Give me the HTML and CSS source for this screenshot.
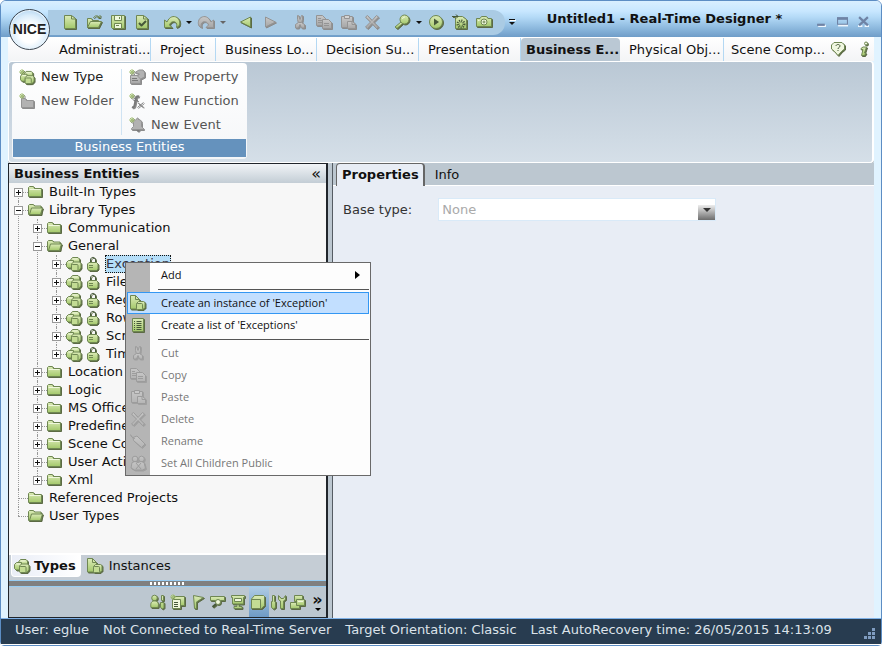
FILE: index.html
```html
<!DOCTYPE html>
<html lang="en">
<head>
<meta charset="utf-8">
<title>Untitled1 - Real-Time Designer</title>
<link rel="stylesheet" href="styles.css">
</head>
<body>
<svg class="sprite" aria-hidden="true">
  <defs>
    <linearGradient id="green" x1="0" y1="0" x2="0" y2="1"><stop offset="0" stop-color="#dcebb8"/><stop offset="1" stop-color="#a3c86a"/></linearGradient>
    <linearGradient id="grey" x1="0" y1="0" x2="0" y2="1"><stop offset="0" stop-color="#c8c8c8"/><stop offset="1" stop-color="#a6a6a6"/></linearGradient>
    <linearGradient id="faint" x1="0" y1="0" x2="0" y2="1"><stop offset="0" stop-color="#c6c6c6"/><stop offset="1" stop-color="#b4b4b4"/></linearGradient>
  </defs>
  <symbol id="file" viewBox="0 0 16 16"><path d="M2.500 1.500h7l4 3v10h-11z"/><path class="line" d="M9.500 1.500v3.500h4"/></symbol>
  <symbol id="open" viewBox="0 0 16 16"><path d="M1.500 13.500v-9h4l1 2h6v7z"/><path d="M1.500 13.500l3-6h11l-3 6z"/><path class="line" d="M7.500 4c1-3 5-3 6 0m-2-.5h2.500v-2.500"/></symbol>
  <symbol id="save" viewBox="0 0 16 16"><path d="M1.500 1.500h13v13h-12l-1-1z"/><path class="light" d="M4.500 1.500h7v5h-7zM4.500 9.500h7v5h-7z"/><path class="line" d="M6 11.500h3M9.500 3v2"/></symbol>
  <symbol id="filecheck" viewBox="0 0 16 16"><path d="M2.500 1.500h7l4 3v10h-11z"/><path class="line" d="M9.500 1.500v3.500h4"/><path class="thick" d="M5 9l2.500 2.500L12 7"/></symbol>
  <symbol id="undo" viewBox="0 0 18 16"><path d="M1.500 6v7.500h7.500l-2.500-2.500c1-3 3.500-4 5.500-3 2 1 2 3 1.500 5.500l2.500-1.500c1.500-3 .5-7-2-8.500-3.500-2-7.500-1-10 4.500z"/></symbol>
  <symbol id="redo" viewBox="0 0 18 16"><g transform="translate(18 0) scale(-1 1)"><path d="M1.500 6v7.500h7.500l-2.500-2.500c1-3 3.500-4 5.500-3 2 1 2 3 1.500 5.500l2.500-1.500c1.500-3 .5-7-2-8.500-3.500-2-7.500-1-10 4.500z"/></g></symbol>
  <symbol id="prev" viewBox="0 0 16 16"><path d="M12.500 3v10l-10-5z"/></symbol>
  <symbol id="next" viewBox="0 0 16 16"><path d="M3.500 3v10l10-5z"/></symbol>
  <symbol id="cut" viewBox="0 0 16 16"><path d="M5.500 1.500h1l1.500 4 1.500-4h1v4l-1 4h-3l-1-4z"/><path d="M6.500 8.500l-3 2v3.500h3l1.500-3.500 1.500 3.500h3v-3.500l-3-2z"/></symbol>
  <symbol id="copy" viewBox="0 0 16 16"><path d="M.5 1.500h6l3 3v7h-9z"/><path d="M6.500 5.500h6l3 3v6h-9z"/><path class="line" d="M2 4.500h3M2 6.500h4M2 8.500h4M8 9.500h5M8 11.500h5"/></symbol>
  <symbol id="paste" viewBox="0 0 16 16"><path d="M1.500 2.500h11v11h-11z"/><path class="light" d="M4.500 1.500h5v3h-5z"/><path d="M7.500 7.500h5l3 2.500v4.500h-8z"/><path class="line" d="M12 7.500v3h3"/></symbol>
  <symbol id="delete" viewBox="0 0 16 16"><path d="M1.500 3l2-1.500 4.500 5 4.500-5 2 1.500-5 5 5 5-2 1.500-4.500-5-4.500 5-2-1.500 5-5z"/></symbol>
  <symbol id="find" viewBox="0 0 16 16"><path d="M7 8l1.500 1.500-5.500 5-2-1.500z"/><circle cx="10.500" cy="5.500" r="4.500"/><path class="glint" d="M8.500 5c.3-1.300 1.200-2 2.500-2"/></symbol>
  <symbol id="play" viewBox="0 0 16 16"><circle cx="8" cy="8" r="6.500"/><path class="solid" d="M6 4.500v7l5-3.500z"/></symbol>
  <symbol id="debug" viewBox="0 0 16 16"><path d="M3.500 2.500h7l4 3v9h-11z"/><circle class="dots" cx="9" cy="10" r="3"/><path class="ink" d="M0 2.500h6M4 .5l2 2-2 2"/></symbol>
  <symbol id="camera" viewBox="0 0 16 16"><path d="M.5 4.500h3.500l1.500-2h5l1.500 2h3.500v8h-15z"/><circle class="light" cx="8" cy="8" r="3"/><circle class="line" cx="8" cy="8" r="1"/><path class="glint" d="M2 6.500h1.500"/></symbol>
  <symbol id="help" viewBox="0 0 16 16"><path class="pale" d="M4 1.500h8l2.500 2.500v4l-3 2.500-3.500 4-3.500-4-3-2.500v-4z"/><path class="ink" d="M6 5c0-2 4-2 4 0 0 1.500-2 1.300-2 3M8 9v1"/></symbol>
  <symbol id="info" viewBox="0 0 16 16"><circle class="pale" cx="10" cy="2.500" r="1.500"/><path d="M5 7.500l2-1.500h3.500l-2 6h1.500l-1.500 2.500h-3l1.500-6H5z"/></symbol>
  <symbol id="folder" viewBox="0 0 16 16"><path d="M.5 12.500v-9l1-1h4l1 2h7v8z"/><path class="glint" d="M1.500 5.500h11"/></symbol>
  <symbol id="folderopen" viewBox="0 0 16 16"><path d="M.5 12.500v-9l1-1h4l1 1.500h6.500v8.500z"/><path d="M1.500 12.500l2-6.500h11l-2 6.500z"/></symbol>
  <symbol id="types" viewBox="0 0 16 16"><path d="M4.500 4l2-2.500h5.500l1.500 1.500v4l-3 3h-5z"/><path class="glint" d="M6.500 3h5"/><path d="M.5 6.500l2-2h5v6l-1 1.500H2L.5 10.500z"/><path class="glint" d="M2.500 6h4"/><path d="M5.500 8l2-2h6l1.500 1.500v4.500l-2 2.500H7L5.500 13z"/><rect class="face" x="5.500" y="8.500" width="6.500" height="6" rx="1"/></symbol>
  <symbol id="lock" viewBox="0 0 12 16"><path class="shackle" d="M3.500 7V4c0-3.500 5-3.500 5 0v3"/><path d="M.5 8l1.500-1.500h7.500l1.500 1.500v5l-1.500 1.500H2L.5 13z"/><path class="line" d="M2 9.500h4M2 11.500h4"/></symbol>
  <symbol id="instance" viewBox="0 0 16 16"><path d="M.5 .5h5l4 4v9.500h-9z"/><path class="line" d="M5.500 .5v4h4"/><path d="M6.500 8.500l2-2h5l1.500 1v5l-2 2h-5.500l-1-1z"/><rect class="face" x="6.500" y="8.500" width="6" height="6" rx="1"/></symbol>
  <symbol id="list" viewBox="0 0 16 16"><path d="M2.500 1.500h11v13h-11z"/><path class="ink" d="M4 4.500h1M6.500 4.500h5M4 6.500h1M6.500 6.500h5M4 8.500h1M6.500 8.500h5M4 10.500h1M6.500 10.500h5M4 12.500h1M6.500 12.500h5"/></symbol>
  <symbol id="tag" viewBox="0 0 16 16"><path d="M3 4.500l4-1.500 8 8-3.500 3.500-8-7z"/><path class="line" d="M5 5.500C3 5 1 4 .5 1.500"/></symbol>
  <symbol id="people" viewBox="0 0 16 16"><circle cx="5" cy="4" r="2.800"/><circle cx="11.500" cy="4" r="2.800"/><path d="M1 13l1-5.500 3-1 3 1 3-1 3 1 1.500 6-3 1.500h-8z"/><path class="line" d="M6 8l5 6M11 8l-5 6"/></symbol>
  <symbol id="newtype" viewBox="0 0 16 16"><use href="#types" x="1" y="1" width="15" height="15"/><use href="#spark" width="6" height="6"/></symbol>
  <symbol id="newfolder" viewBox="0 0 16 16"><path class="mid" d="M2.500 14.500v-9h4l1 2h7v7z"/><use href="#spark" width="6" height="6"/></symbol>
  <symbol id="newprop" viewBox="0 0 16 16"><path d="M1.500 6.500h10v8h-10z"/><path class="mid" d="M6 3.500l4-2.500h4l1.500 2v5l-4 2-3-3 2-2z"/><path class="ink" d="M3 9.500h5M3 11.500h6"/><use href="#spark" width="6" height="6"/></symbol>
  <symbol id="newfunc" viewBox="0 0 16 16"><path class="thick" d="M3 14c2 .8 2.500-1 3-4l1-5c.4-1.500 1.500-2 3-1.500"/><path class="ink" d="M4.500 7.500H9M9 10c2 0 3 4.500 5.500 4M14.500 9.500l-6 5"/><use href="#spark" width="6" height="6"/></symbol>
  <symbol id="newevent" viewBox="0 0 16 16"><path class="mid" d="M2.500 11.500l2-2v-4c0-2 2-2.500 3-3 0-2 2-2 2 0 2 .5 3 1 3 3v4l2 2v1h-12z"/><path class="solid" d="M7 13h4l-2 2z"/><use href="#spark" width="6" height="6"/></symbol>
  <symbol id="spark" viewBox="0 0 6 6"><path class="spark" d="M3 0v6M0 3h6M1 1l4 4M5 1L1 5"/></symbol>
  <symbol id="users" viewBox="0 0 16 16"><circle cx="4.500" cy="4" r="2.800"/><path d="M1 13.500c-1-5 1-6.500 3.500-6.500s5 1.500 3.500 6.500z"/><path d="M11.500 1.500h2v5h-2zM10.500 8.500h3.500v5l-1.500 1.500-2-1.500z"/></symbol>
  <symbol id="forms" viewBox="0 0 16 16"><path d="M4.500 2.500h10v9h-10z"/><path class="light" d="M2.500 5.500h8v9h-8z"/><path class="ink" d="M4 8.500h4M4 10.500h4M4 12.500h4"/><use href="#spark" width="6" height="6"/></symbol>
  <symbol id="flag" viewBox="0 0 16 16"><path d="M3.500 1.500l10 2-7 4.500v6.500h-2z"/></symbol>
  <symbol id="flow" viewBox="0 0 16 16"><path d="M.5 2.500h14v4h-4l-2 3-3-3h-5z"/><circle class="light" cx="8" cy="8" r="2.500"/><path class="thick" d="M6 10l-3.500 3"/></symbol>
  <symbol id="screen" viewBox="0 0 16 16"><path d="M1.500 1.500h13v2h-1v6.500h-11v-6.500h-1z"/><path class="light" d="M4.500 4.500h7v3h-7z"/><path d="M7 10.500h2v2h3v2h-8v-2h3z"/></symbol>
  <symbol id="cube" viewBox="0 0 16 16"><path d="M1.500 5l3-3.500h9l1 1v9l-3 3h-10z"/><path class="face" d="M1.500 5.500h9v9h-9z"/></symbol>
  <symbol id="tools" viewBox="0 0 16 16"><path d="M2.500 1.500h2v6h1v6l-2 1.500-2-1.500v-6h1z"/><path d="M8.500 1.500v4l2 1.500v7.500h3v-7.500l2-1.500v-4l-2 3h-2.500z"/></symbol>
  <symbol id="windows" viewBox="0 0 16 16"><path d="M4.500 1.500h8v6h-8z"/><path d="M.5 8.500h9v6h-9z"/><path d="M6.500 5.500h8v6h-8z"/><path class="glint" d="M8 7.500h5"/></symbol>
</svg>

<div class="window">
  <header class="titlebar">
    <div class="logo">NICE</div>
    <div class="quick">
      <button aria-label="New"><svg class="ico"><use href="#file"/></svg></button>
      <button aria-label="Open"><svg class="ico"><use href="#open"/></svg></button>
      <button aria-label="Save"><svg class="ico"><use href="#save"/></svg></button>
      <button aria-label="Validate"><svg class="ico"><use href="#filecheck"/></svg></button>
      <button class="gap" aria-label="Undo"><svg class="ico wide"><use href="#undo"/></svg></button>
      <button class="drop" aria-label="Undo history"></button>
      <button class="off" aria-label="Redo"><svg class="ico wide"><use href="#redo"/></svg></button>
      <button class="drop off" aria-label="Redo history"></button>
      <button class="gap" aria-label="Back"><svg class="ico"><use href="#prev"/></svg></button>
      <button class="off" aria-label="Forward"><svg class="ico"><use href="#next"/></svg></button>
      <button class="gap off" aria-label="Cut"><svg class="ico"><use href="#cut"/></svg></button>
      <button class="off" aria-label="Copy"><svg class="ico"><use href="#copy"/></svg></button>
      <button class="off" aria-label="Paste"><svg class="ico"><use href="#paste"/></svg></button>
      <button class="off" aria-label="Delete"><svg class="ico"><use href="#delete"/></svg></button>
      <button class="gap" aria-label="Find"><svg class="ico"><use href="#find"/></svg></button>
      <button class="drop" aria-label="Find options"></button>
      <button aria-label="Run"><svg class="ico"><use href="#play"/></svg></button>
      <button aria-label="Debug"><svg class="ico"><use href="#debug"/></svg></button>
      <button aria-label="Capture"><svg class="ico"><use href="#camera"/></svg></button>
    </div>
    <button class="more" aria-label="Customize toolbar"></button>
    <h1>Untitled1 - Real-Time Designer *</h1>
    <div class="controls">
      <button aria-label="Minimize"><svg viewBox="0 0 10 10"><path class="hi" d="M2 9h7"/><path d="M1 8h7"/></svg></button>
      <button aria-label="Maximize"><svg viewBox="0 0 10 10"><path class="hi" d="M1 8.500h9"/><path class="thin" d="M.5 3h9M.5 7.500h9M.5 2v6M9.500 2v6"/><path d="M0 2h10"/></svg></button>
      <button aria-label="Close"><svg viewBox="0 0 10 10"><path class="hi" d="M0 9.500h4M6 9.500h4"/><path d="M1 1l8 7.500M9 1L1 8.500"/></svg></button>
    </div>
  </header>

  <div class="frame">
    <nav class="ribbontabs">
      <a href="#">Administrati...</a>
      <a href="#">Project</a>
      <a href="#">Business Lo...</a>
      <a href="#">Decision Su...</a>
      <a href="#">Presentation</a>
      <a href="#" class="active" aria-current="page">Business E...</a>
      <a href="#">Physical Obj...</a>
      <a href="#">Scene Comp...</a>
      <button aria-label="Help"><svg class="ico"><use href="#help"/></svg></button>
      <button aria-label="About"><svg class="ico"><use href="#info"/></svg></button>
    </nav>

    <section class="ribbon">
      <div class="group">
        <div class="commands">
          <div class="stack">
            <button class="ready"><svg class="ico"><use href="#newtype"/></svg>New Type</button>
            <button class="off"><svg class="ico"><use href="#newfolder"/></svg>New Folder</button>
          </div>
          <div class="stack">
            <button class="off"><svg class="ico"><use href="#newprop"/></svg>New Property</button>
            <button class="off"><svg class="ico"><use href="#newfunc"/></svg>New Function</button>
            <button class="off"><svg class="ico"><use href="#newevent"/></svg>New Event</button>
          </div>
        </div>
        <h2>Business Entities</h2>
      </div>
    </section>

    <main class="work">
      <aside class="explorer">
        <header><h2>Business Entities</h2><button aria-label="Collapse panel">«</button></header>
        <ul class="tree">
          <li><div class="row"><button class="exp plus" aria-label="Expand"></button><svg class="ico"><use href="#folder"/></svg><span>Built-In Types</span></div></li>
          <li><div class="row"><button class="exp" aria-label="Collapse"></button><svg class="ico"><use href="#folderopen"/></svg><span>Library Types</span></div>
            <ul>
              <li><div class="row"><button class="exp plus" aria-label="Expand"></button><svg class="ico"><use href="#folder"/></svg><span>Communication</span></div></li>
              <li><div class="row"><button class="exp" aria-label="Collapse"></button><svg class="ico"><use href="#folderopen"/></svg><span>General</span></div>
                <ul>
                  <li><div class="row"><button class="exp plus" aria-label="Expand"></button><svg class="ico"><use href="#types"/></svg><svg class="ico lock"><use href="#lock"/></svg><span class="selected">Exception</span></div>
                    <div class="menu" role="menu">
                      <button role="menuitem" class="sub">Add</button>
                      <hr>
                      <button role="menuitem" class="hot"><svg class="ico"><use href="#instance"/></svg>Create an instance of 'Exception'</button>
                      <button role="menuitem"><svg class="ico"><use href="#list"/></svg>Create a list of 'Exceptions'</button>
                      <hr>
                      <button role="menuitem" class="dim"><svg class="ico"><use href="#cut"/></svg>Cut</button>
                      <button role="menuitem" class="dim"><svg class="ico"><use href="#copy"/></svg>Copy</button>
                      <button role="menuitem" class="dim"><svg class="ico"><use href="#paste"/></svg>Paste</button>
                      <button role="menuitem" class="dim"><svg class="ico"><use href="#delete"/></svg>Delete</button>
                      <button role="menuitem" class="dim"><svg class="ico"><use href="#tag"/></svg>Rename</button>
                      <button role="menuitem" class="dim"><svg class="ico"><use href="#people"/></svg>Set All Children Public</button>
                    </div>
                  </li>
                  <li><div class="row"><button class="exp plus" aria-label="Expand"></button><svg class="ico"><use href="#types"/></svg><svg class="ico lock"><use href="#lock"/></svg><span>File</span></div></li>
                  <li><div class="row"><button class="exp plus" aria-label="Expand"></button><svg class="ico"><use href="#types"/></svg><svg class="ico lock"><use href="#lock"/></svg><span>Reg</span></div></li>
                  <li><div class="row"><button class="exp plus" aria-label="Expand"></button><svg class="ico"><use href="#types"/></svg><svg class="ico lock"><use href="#lock"/></svg><span>Row</span></div></li>
                  <li><div class="row"><button class="exp plus" aria-label="Expand"></button><svg class="ico"><use href="#types"/></svg><svg class="ico lock"><use href="#lock"/></svg><span>Scr</span></div></li>
                  <li><div class="row"><button class="exp plus" aria-label="Expand"></button><svg class="ico"><use href="#types"/></svg><svg class="ico lock"><use href="#lock"/></svg><span>Tim</span></div></li>
                </ul>
              </li>
              <li><div class="row"><button class="exp plus" aria-label="Expand"></button><svg class="ico"><use href="#folder"/></svg><span>Location</span></div></li>
              <li><div class="row"><button class="exp plus" aria-label="Expand"></button><svg class="ico"><use href="#folder"/></svg><span>Logic</span></div></li>
              <li><div class="row"><button class="exp plus" aria-label="Expand"></button><svg class="ico"><use href="#folder"/></svg><span>MS Office</span></div></li>
              <li><div class="row"><button class="exp plus" aria-label="Expand"></button><svg class="ico"><use href="#folder"/></svg><span>Predefine</span></div></li>
              <li><div class="row"><button class="exp plus" aria-label="Expand"></button><svg class="ico"><use href="#folder"/></svg><span>Scene Co</span></div></li>
              <li><div class="row"><button class="exp plus" aria-label="Expand"></button><svg class="ico"><use href="#folder"/></svg><span>User Acti</span></div></li>
              <li><div class="row"><button class="exp plus" aria-label="Expand"></button><svg class="ico"><use href="#folder"/></svg><span>Xml</span></div></li>
            </ul>
          </li>
          <li><div class="row leaf"><svg class="ico"><use href="#folder"/></svg><span>Referenced Projects</span></div></li>
          <li><div class="row leaf"><svg class="ico"><use href="#folderopen"/></svg><span>User Types</span></div></li>
        </ul>
        <div class="viewtabs">
          <button class="active"><svg class="ico"><use href="#types"/></svg>Types</button>
          <button><svg class="ico"><use href="#instance"/></svg>Instances</button>
        </div>
        <div class="grip"></div>
        <div class="modes">
          <button aria-label="Administration"><svg class="ico"><use href="#users"/></svg></button>
          <button aria-label="Project"><svg class="ico"><use href="#forms"/></svg></button>
          <button aria-label="Business Logic"><svg class="ico"><use href="#flag"/></svg></button>
          <button aria-label="Decision Support"><svg class="ico"><use href="#flow"/></svg></button>
          <button aria-label="Presentation"><svg class="ico"><use href="#screen"/></svg></button>
          <button class="active" aria-label="Business Entities"><svg class="ico"><use href="#cube"/></svg></button>
          <button aria-label="Physical Objects"><svg class="ico"><use href="#tools"/></svg></button>
          <button aria-label="Scene Composer"><svg class="ico"><use href="#windows"/></svg></button>
          <button class="overflow" aria-label="More">»</button>
        </div>
      </aside>

      <section class="editor">
        <div class="pagetabs">
          <button class="active">Properties</button>
          <button>Info</button>
        </div>
        <form class="field">
          <label for="base">Base type:</label>
          <div class="combo"><select id="base" disabled><option>None</option></select></div>
        </form>
      </section>
    </main>
  </div>

  <footer class="status">
    <span>User: eglue</span>
    <span>Not Connected to Real-Time Server</span>
    <span>Target Orientation: Classic</span>
    <span>Last AutoRecovery time: 26/05/2015 14:13:09</span>
    <svg class="size" viewBox="0 0 12 12"><path d="M8 1h3v3h-3zM4 5h3v3h-3zM8 5h3v3h-3zM0 9h3v3h-3zM4 9h3v3h-3zM8 9h3v3h-3z"/></svg>
  </footer>
</div>
</body>
</html>
```
FILE: styles.css
```css
* { box-sizing: border-box; }

body {
  margin: 0;
  font: 13px/18px "DejaVu Sans", Verdana, sans-serif;
  color: #111;
  background: #fff;
}

h1, h2 { margin: 0; font-size: 13px; font-weight: bold; }

button {
  display: flex;
  align-items: center;
  margin: 0;
  padding: 0;
  border: 0;
  background: none;
  font: inherit;
  color: inherit;
}

a { color: inherit; text-decoration: none; }

ul { list-style: none; margin: 0; padding: 0; }

.sprite { position: absolute; width: 0; height: 0; }

/* Icons */
.ico {
  --fill: url(#green);
  --edge: #6f8752;
  --ink: #46583a;
  --pale: #eff7dc;
  --face: #c3dc94;
  flex: none;
  width: 16px;
  height: 16px;
  fill: var(--fill);
  stroke: var(--edge);
  stroke-width: 1;
  stroke-linejoin: round;
  overflow: visible;
  filter: drop-shadow(1px 1px 0 #5b6a44);
}
.ico.wide { width: 18px; }
.ico.lock { width: 12px; }
.off .ico {
  --fill: url(#grey);
  --edge: #949494;
  --ink: #7a7a7a;
  --pale: #d4d4d4;
  --face: #bdbdbd;
  filter: drop-shadow(1px 1px 0 #8c8c8c);
}
.dim .ico {
  --fill: url(#faint);
  --edge: #9c9c9c;
  --ink: #969696;
  --pale: #c8c8c8;
  --face: #c0c0c0;
  filter: drop-shadow(1px 1px 0 #a0a0a0);
}
.line { fill: none; stroke: var(--edge); }
.ink { fill: none; stroke: var(--ink); }
.dots { fill: none; stroke: var(--ink); stroke-width: 3; stroke-dasharray: 1 1; }
.thick { fill: none; stroke: var(--ink); stroke-width: 2; }
.shackle { fill: none; stroke: var(--ink); stroke-width: 1; }
.light { fill: var(--pale); }
.face { fill: var(--face); }
.pale { fill: #f0f7e0; }
.mid { fill: #b2b2b2; }
.solid { fill: var(--ink); stroke: none; }
.glint { fill: none; stroke: var(--pale); }
.spark { fill: none; stroke: #a5c277; stroke-width: 1; }
.off .spark { stroke: #b0b0b0; }

/* Window shell */
.window {
  display: flex;
  flex-direction: column;
  min-height: 100vh;
  border: 1px solid #5c8dc4;
  border-radius: 6px 6px 4px 4px;
}

.titlebar {
  position: relative;
  display: flex;
  align-items: flex-start;
  height: 36px;
  padding: 9px 12px 0 47px;
  border-radius: 5px 5px 0 0;
  background: linear-gradient(#d9efff 0, #c8e7ff 28%, #b4daf7 45%, #8db9de 75%, #6f9dc8 100%);
}

.logo {
  position: absolute;
  left: 8px;
  top: 8px;
  z-index: 2;
  width: 41px;
  height: 41px;
  border: 1px solid #3d4650;
  border-radius: 50%;
  background: radial-gradient(circle at 50% 60%, #fff 30%, #d9ecfa 60%, #90bfe8 100%);
  box-shadow: inset 0 0 0 1px #e8f4fd;
  font: bold 14px/39px "Liberation Sans", Arial, sans-serif;
  text-align: center;
  color: #222;
}

.quick {
  display: flex;
  height: 25px;
  padding: 0 9px 0 10px;
  border-radius: 0 12px 12px 0;
  background: #aacbe4;
}
.quick button { justify-content: center; width: 24px; height: 24px; }
.quick .ico { margin-left: -1px; }
.quick .gap { margin-left: 6px; }
.quick .drop { width: 10px; }
.quick .drop::after {
  content: "";
  border: 3px solid transparent;
  border-top-color: #111;
  border-bottom: 0;
}
.quick .drop.off::after { border-top-color: #666; }

.more {
  flex-direction: column;
  justify-content: center;
  gap: 2px;
  width: 14px;
  height: 24px;
}
.more::before { content: ""; width: 6px; height: 1px; background: #111; box-shadow: 1px 1px #fff; }
.more::after { content: ""; border: 3px solid transparent; border-top-color: #111; border-bottom: 0; }

.titlebar h1 { flex: 1; padding-right: 6px; text-align: center; white-space: nowrap; }

.controls { display: flex; gap: 10px; padding-top: 6px; }
.controls svg { width: 11px; height: 11px; stroke: #6f83a5; stroke-width: 2; fill: none; }
.controls .hi { stroke: #eef6fd; }
.controls .thin { stroke-width: 1; }

.frame {
  display: flex;
  flex-direction: column;
  flex: 1;
  padding: 0 7px;
  background: #e0f3ff;
}

/* Ribbon */
.ribbontabs {
  display: grid;
  grid-template-columns: 101px 65px 101px 102px 102px 101px 102px 1fr 26px 26px;
  padding-left: 42px;
  height: 24px;
  background: linear-gradient(#fff, #f3f4f6);
}
.ribbontabs a {
  display: flex;
  align-items: center;
  padding-left: 9px;
  margin-top: 1px;
  white-space: nowrap;
  border-right: 1px solid #b4d8f3;
}
.ribbontabs a:nth-child(n+7) { padding-left: 7px; }
.ribbontabs a:nth-child(8) { border-right: 0; }
.ribbontabs .active {
  margin-right: 2px;
  padding-left: 5px;
  border: 0;
  border-radius: 4px 4px 0 0;
  background: #bac8d4;
  font-weight: bold;
}
.ribbontabs button { justify-content: center; }

.ribbon {
  display: flex;
  height: 102px;
  padding: 1px 3px;
  border: 1px solid #fff;
  border-width: 1px 2px 1px 1px;
  border-radius: 4px;
  background: linear-gradient(#bac8d5, #d5dfe8);
  box-shadow: 0 1px #999;
}
.group {
  display: flex;
  flex-direction: column;
  align-self: flex-start;
  width: 235px;
  padding: 2px 1px;
  border-radius: 4px;
  background: linear-gradient(#fff, #f4f6f8);
}
.commands { display: flex; height: 74px; }
.stack { padding-left: 6px; }
.stack:first-child { width: 108px; }
.stack + .stack {
  padding-left: 8px;
  background: linear-gradient(#cfe3f3, #cfe3f3) left center / 1px 66px no-repeat;
}
.stack button { gap: 6px; height: 24px; white-space: nowrap; color: #222; }
.stack .off { color: #555; }
.group h2 {
  height: 18px;
  font-weight: normal;
  line-height: 16px;
  text-align: center;
  color: #fff;
  background: #6592bd;
}

/* Work area */
.work {
  display: grid;
  grid-template-columns: 320px 1fr;
  column-gap: 4px;
  flex: 1;
  background: #bcc7d0;
}

.explorer {
  display: flex;
  flex-direction: column;
  border: 1px solid #20252b;
  border-right-width: 2px;
  background: #f7f7f7;
}
.explorer > header {
  display: flex;
  justify-content: space-between;
  padding: 0 5px;
  height: 19px;
  line-height: 20px;
  background: linear-gradient(#f1f4f7, #c3cdd5);
}
.explorer > header button { font-size: 16px; }

.tree { flex: 1; padding-left: 5px; }
.tree ul { padding-left: 19px; }
.tree li { position: relative; }
.tree li::before {
  content: "";
  position: absolute;
  left: 4px;
  top: 0;
  bottom: 0;
  border-left: 1px dotted #999;
}
.tree > li:first-child::before { top: 9px; }
.tree li:last-child::before { bottom: auto; height: 9px; }
.row { display: flex; align-items: center; height: 18px; white-space: nowrap; }
.row .ico { margin-right: 5px; }
.row .lock { margin-right: 7px; }
.row::before { content: ""; order: 1; width: 5px; border-top: 1px dotted #999; }
.row.leaf::before { width: 10px; margin-left: 4px; }
.row > * { order: 2; }
.row .exp {
  order: 0;
  z-index: 1;
  width: 9px;
  height: 9px;
  border: 1px solid #999;
  background: linear-gradient(#111, #111) center / 5px 1px no-repeat #fff;
}
.row .exp.plus {
  background: linear-gradient(#111, #111) center / 5px 1px no-repeat, linear-gradient(#111, #111) center / 1px 5px no-repeat, #fff;
}
.row .selected { outline: 1px dotted #111; outline-offset: -1px; padding: 0 1px; margin-left: -1px; background: #b5def8; color: #334; }

/* Context menu */
.menu {
  position: absolute;
  left: 73px;
  top: 7px;
  z-index: 5;
  width: 246px;
  padding: 1px;
  border: 1px solid #696969;
  background: linear-gradient(90deg, #b5b5b5 24px, #fdfdfd 24px);
  font: 11px/16px "Open Sans", "Segoe UI", sans-serif;
}
.menu button {
  width: 100%;
  height: 22px;
  padding-left: 33px;
  white-space: nowrap;
  border: 1px solid transparent;
}
.menu .ico { margin-left: -31px; margin-right: 15px; }
.menu .dim { color: #777; }
.menu .hot { border-color: #3397f3; background: #c2dfff; }
.menu .sub { justify-content: space-between; padding-right: 8px; }
.menu .sub::after { content: ""; border: 4px solid transparent; border-left: 5px solid #000; border-right: 0; }
.menu hr { height: 1px; margin: 3px 0 2px 31px; border: 0; background: #555; }

.viewtabs { display: flex; height: 27px; border-top: 2px solid #fff; background: #c5cdd5; }
.viewtabs button { gap: 6px; padding: 0 6px; height: 22px; }
.viewtabs .active {
  gap: 4px;
  margin-left: 2px;
  padding: 0 4px 0 2px;
  border: 1px solid #fff;
  border-top: 0;
  border-radius: 0 0 4px 4px;
  background: linear-gradient(90deg, #eaeef7, #fff);
  font-weight: bold;
}

.grip {
  height: 7px;
  border: solid #98cdf3;
  border-width: 1px 0;
  background: repeating-linear-gradient(90deg, #fff 0 2px, transparent 2px 4px) center / 36px 3px no-repeat #808080;
}

.modes { display: flex; justify-content: flex-end; height: 30px; background: #bcc7d0; }
.modes button { justify-content: center; width: 20px; }
.modes .ico { margin-left: -2px; }
.modes .active { background: linear-gradient(#aecbe4, #6f9bc6); }
.modes .overflow {
  flex-direction: column;
  width: 17px;
  font-size: 16px;
  font-weight: bold;
  line-height: 12px;
}
.modes .overflow::after { content: ""; margin-top: 2px; border: 3px solid transparent; border-top-color: #000; border-bottom: 0; }

/* Editor */
.editor { border-left: 1px solid #555c63; background: #e8edf5; }
.pagetabs { display: flex; gap: 2px; height: 23px; padding-left: 3px; border-bottom: 1px solid #fff; background: #bcc7d0; }
.pagetabs button { padding: 0 8px; height: 23px; }
.pagetabs .active {
  padding: 0 4px 0 5px;
  border: 2px solid #666;
  border-width: 1px 2px 0 1px;
  border-radius: 4px 4px 0 0;
  background: #e8edf5;
  font-weight: bold;
}
.field { display: flex; align-items: center; gap: 26px; padding: 12px 10px; color: #333; }
.combo { position: relative; flex: 0 1 278px; }
.combo select {
  display: block;
  width: 100%;
  height: 23px;
  padding: 0 3px;
  appearance: none;
  border: 1px solid #d9eaf8;
  border-radius: 0;
  background: linear-gradient(#ededed, #6d6d6d) right bottom / 17px 15px no-repeat #fff;
  font: inherit;
  color: #aaa;
  opacity: 1;
}
.combo::after {
  content: "";
  position: absolute;
  right: 5px;
  top: 10px;
  border: 4px solid transparent;
  border-top-color: #333;
  border-bottom: 0;
}

.status {
  display: flex;
  align-items: center;
  gap: 14px;
  height: 27px;
  padding: 0 5px 3px 14px;
  border-top: 1px solid #7fb2e8;
  border-bottom: 1px solid #fff;
  background: #283c50;
  color: #dce3ea;
  white-space: nowrap;
}
.size { width: 12px; height: 12px; margin: 6px 0 0 auto; fill: #7f9cc0; }
```
